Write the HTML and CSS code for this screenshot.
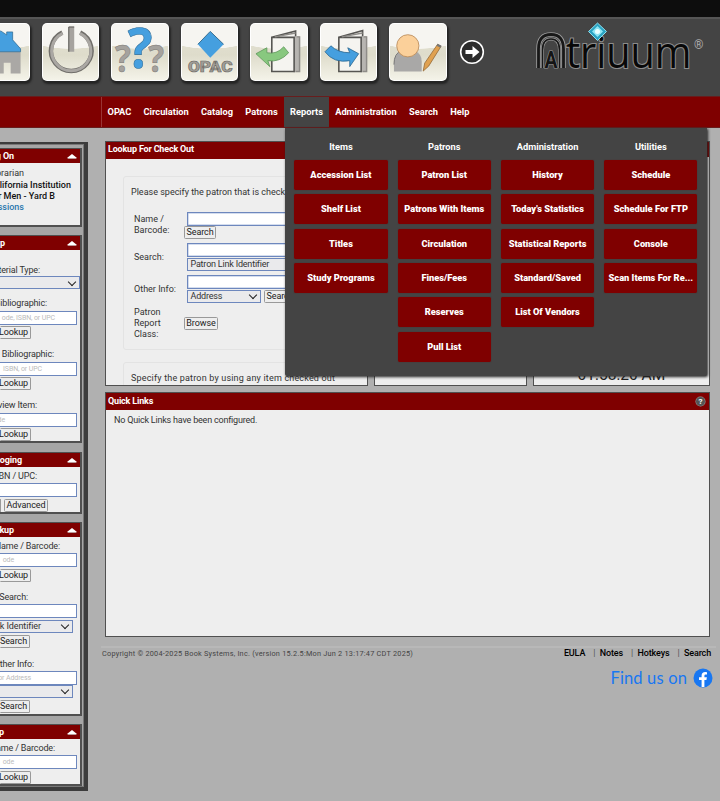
FILE: index.html
```html
<!DOCTYPE html>
<html lang="en">
<head>
<meta charset="utf-8">
<title>Atriuum</title>
<link rel="stylesheet" href="styles.css">
</head>
<body>
<div class="topbar"></div>
<header class="header">
  <div class="tiles">
    <div class="tile"><svg viewBox="0 0 58 58"><path d="M8 29h41v22H39V40h-7v11H8z" fill="#aaa8a5"/><path d="M6 29v-3L29 8l6 4V9h6v8l8 9v3z" fill="#459fdf" stroke="#28648d" stroke-width=".7"/></svg></div>
    <div class="tile"><svg viewBox="0 0 58 58"><path d="M20.500 9.500a20.500 20.500 0 1 0 18 0" fill="none" stroke="#706e6a" stroke-width="4.500"/><path d="M20.800 10.500a19.800 19.800 0 1 0 17.400 0" fill="none" stroke="#aaa7a3" stroke-width="3"/><path d="M27 4h5.500v25H27z" fill="#a6a39f"/><path d="M27 29V4h5.500" fill="none" stroke="#55534f"/></svg></div>
    <div class="tile"><svg viewBox="0 0 58 58"><g class="q"><text class="q-small" x="4" y="49.500" textLength="16" lengthAdjust="spacingAndGlyphs">?</text><text class="q-small" x="37.500" y="49.500" textLength="16" lengthAdjust="spacingAndGlyphs">?</text><text class="q-big" x="17" y="45" textLength="25" lengthAdjust="spacingAndGlyphs">?</text></g></svg></div>
    <div class="tile"><svg viewBox="0 0 58 58"><path d="M29.500 8.500 43 21.500 29.500 35 17 21.500z" fill="#459fdf"/><path d="M17 21.500 29.500 8.500 43 21.500" fill="none" stroke="#376d91" stroke-width="1"/><text class="tile-word" x="7" y="49" textLength="45" lengthAdjust="spacingAndGlyphs">OPAC</text></svg></div>
    <div class="tile"><svg viewBox="0 0 58 58"><path d="M44 14l6-1v36l-6 1z" fill="#b7b5b1"/><path d="M22 14.500 46 8v5.500M22 14.500h22.500V49H22z" fill="#f5f4f0" stroke="#565552" stroke-width="1.600"/><path d="M25 14 46 10M47 14h3v35h-4" fill="none" stroke="#8e8c88" stroke-width="1.500"/><path d="M6 31 17 25v5q10 2 17-6l5 6q-9 10-21 8l2 6z" fill="#88c87f" stroke="#5e9659" stroke-width=".8"/></svg></div>
    <div class="tile"><svg viewBox="0 0 58 58"><path d="M41 14l6-1v36l-6 1z" fill="#b7b5b1"/><path d="M19 14.500 43 7.500v6M19 14.500h22.500V49H19z" fill="#f5f4f0" stroke="#565552" stroke-width="1.600"/><path d="M22 14 43 10M44 14h3v35h-4" fill="none" stroke="#8e8c88" stroke-width="1.500"/><path d="m5 29 6-6q7 7 19 7l-2-5 11 6-9 13v-6q-16 3-25-9z" fill="#459fdf" stroke="#28658f" stroke-width=".8"/></svg></div>
    <div class="tile"><svg viewBox="0 0 58 58"><path d="M5 49V39q1-9 8-11h13q7 3 7 11v10z" fill="#a9a8a7"/><path d="M5 42q0-12 8-14" fill="none" stroke="#777"/><circle cx="19" cy="23" r="11.200" fill="#fbd09a" stroke="#b58656" stroke-width=".8"/><path d="m34.500 48.500 1.500-8 13-19 3.500 2-12.500 20z" fill="#e0a150" stroke="#946a37" stroke-width=".8"/><path d="m49 21 4 2-1 2-4-2z" fill="#777"/></svg></div>
  </div>
  <svg class="next" viewBox="0 0 26 26"><circle cx="13" cy="13" r="11.300" fill="#2c2c2c" stroke="#fff" stroke-width="1.600"/><path d="M6.500 11h7V7l7 6-7 6v-4h-7z" fill="#fff"/></svg>
  <svg class="logo" viewBox="0 0 176 54">
    <g fill="none">
      <path d="M2.500 45V26Q2.500 11.500 15 11.500T27.500 26v19" stroke="#9a9a9a" stroke-width="4.600"/>
      <path d="M2.500 45V26Q2.500 11.500 15 11.500T27.500 26v19" stroke="#181818" stroke-width="2.800"/>
      <path d="M6.500 45V27Q6.500 16 15 16t8.500 11v18" stroke="#9a9a9a" stroke-width="3"/>
      <path d="M6.500 45V27Q6.500 16 15 16t8.500 11v18" stroke="#181818" stroke-width="1.600"/>
    </g>
    <text class="logo-a" x="8.500" y="45" textLength="13" lengthAdjust="spacingAndGlyphs">A</text>
    <text class="logo-text" x="30" y="45" textLength="125.500" lengthAdjust="spacingAndGlyphs">triuum</text>
    <text class="logo-r" x="158" y="25.500">®</text>
    <path d="m61.500 0 9 8.500-9 9-9-9z" fill="#2aa3c2" stroke="#8edcec"/><path d="m61.500 3 5.500 5.500-5.500 5.500L56 8.500z" fill="#8fe6f4"/><circle cx="61.500" cy="8.500" r="2.500" fill="#e8ffff"/>
  </svg>
</header>
<nav class="nav">
  <a>OPAC</a><a>Circulation</a><a>Catalog</a><a>Patrons</a><a class="active">Reports</a><a>Administration</a><a>Search</a><a>Help</a>
  <div class="menu">
    <div class="col"><h3>Items</h3><b>Accession List</b><b>Shelf List</b><b>Titles</b><b>Study Programs</b></div>
    <div class="col"><h3>Patrons</h3><b>Patron List</b><b>Patrons With Items</b><b>Circulation</b><b>Fines/Fees</b><b>Reserves</b><b>Pull List</b></div>
    <div class="col"><h3>Administration</h3><b>History</b><b>Today's Statistics</b><b>Statistical Reports</b><b>Standard/Saved</b><b>List Of Vendors</b></div>
    <div class="col"><h3>Utilities</h3><b>Schedule</b><b>Schedule For FTP</b><b>Console</b><b>Scan Items For Re...</b></div>
  </div>
</nav>
<div class="page">
  <aside class="side">
    <section class="panel p-user"><h2><span class="w14">g On</span><i></i></h2>
      <p class="w24">orarian</p><p class="w71 strong">alifornia Institution</p><p class="w55 strong">r Men - Yard B</p><p class="w24 link">ssions</p></section>
    <section class="panel p-lookup"><h2><span class="w5">p</span><i></i></h2>
      <div class="field first"><label class="w40">terial Type:</label><div class="select wide"></div></div>
      <div class="field"><label class="w47">Bibliographic:</label><div class="input"><span class="w55">ode, ISBN, or UPC</span></div><button>Lookup</button></div>
      <div class="field"><label class="w54">Bibliographic:</label><div class="input"><span class="w42">ISBN, or UPC</span></div><button>Lookup</button></div>
      <div class="field"><label class="w37">view Item:</label><div class="input"><span class="w5">de</span></div><button>Lookup</button></div></section>
    <section class="panel tight p-catalog"><h2><span class="w22">oging</span><i></i></h2>
      <div class="field"><label class="w37">BN / UPC:</label><div class="input"></div><div class="buttons"><button class="stub"></button><button class="adv">Advanced</button></div></div></section>
    <section class="panel tight p-patron"><h2><span class="w14">kup</span><i></i></h2>
      <div class="field"><label class="w60">Name / Barcode:</label><div class="input"><span class="w14">ode</span></div><button>Lookup</button></div>
      <div class="field tall"><label class="w28">Search:</label><div class="input"></div><div class="select gap"><span class="w41">k Identifier</span></div><button class="b-search">Search</button></div>
      <div class="field"><label class="w34">ther Info:</label><div class="input"><span class="w31">or Address</span></div><div class="select"></div><button class="b-search">Search</button></div></section>
    <section class="panel tight p-last"><h2><span class="w4">p</span><i></i></h2>
      <div class="field"><label class="w55">ame / Barcode:</label><div class="input"><span class="w14">ode</span></div><button>Lookup</button></div></section>
  </aside>
  <main class="main">
    <div class="cards">
      <section class="card"><h2>Lookup For Check Out</h2>
        <div class="box lookup">
          <p>Please specify the patron that is checking out</p>
          <div class="row r1"><label>Name /<br>Barcode:</label><div><div class="input"></div><button>Search</button></div></div>
          <div class="row r2"><label>Search:</label><div><div class="input"></div><div class="select long"><span>Patron Link Identifier</span></div></div></div>
          <div class="row r3"><label>Other Info:</label><div><div class="input"></div><div class="pair"><div class="select"><span>Address</span></div><button>Search</button></div></div></div>
          <div class="row r4"><label>Patron<br>Report<br>Class:</label><button>Browse</button></div>
        </div>
        <div class="box item"><p>Specify the patron by using any item checked out</p></div>
      </section>
      <section class="card"><h2></h2></section>
      <section class="card clock"><h2></h2><time>01:58:20 AM</time></section>
    </div>
    <section class="card quick"><h2>Quick Links<em>?</em></h2><p>No Quick Links have been configured.</p></section>
    <footer>
      <div class="foot"><small>Copyright © 2004-2025 Book Systems, Inc. (version 15.2.5:Mon Jun 2 13:17:47 CDT 2025)</small>
        <div class="links"><a>EULA</a><a>Notes</a><a>Hotkeys</a><a>Search</a></div></div>
      <div class="find"><span>Find us on</span><svg viewBox="0 0 20 20"><circle cx="10" cy="10" r="9.500" fill="#1877f2"/><path d="M8.600 19v-7H6V9.300h2.600V7.500q0-3.500 3.700-3.500l1.700.2v2.300h-1.300q-1.300 0-1.300 1.300v1.500h2.500l-.5 2.700h-2V19z" fill="#fff"/></svg></div>
    </footer>
  </main>
</div>
</body>
</html>
```

FILE: styles.css
```css
* { box-sizing: border-box; }
html, body { margin: 0; width: 720px; height: 801px; overflow: hidden; }
body { background: #b0b0b0; font: 9px/12px Roboto, "Liberation Sans", sans-serif; color: #333; }
h2, h3, p { margin: 0; font-size: 9px; }

.topbar { height: 17px; background: #0d0d0d; }
.header { height: 79px; background: #444; border-top: 2px solid #555; display: flex; }
.tiles { display: flex; gap: 12px; margin: 4px 0 0 -28px; flex: none; }
.tile { width: 57.5px; height: 57.5px; border-radius: 5px; background: radial-gradient(ellipse 60px 26px at 50% 0, #f6f5f1 98%, transparent 100%), linear-gradient(#e5e3d5, #dedccb 55%, #f5f4ea); box-shadow: inset 0 0 0 1px #fff, 1px 2px 2px 1px #242424; }
.tile svg { display: block; width: 100%; height: 100%; }
.q text { font-family: "Open Sans", sans-serif; font-weight: 700; }
.q-small { font-size: 37px; fill: #a5a29e; stroke: #7a7773; stroke-width: .5px; }
.q-big { font-size: 56px; fill: #459fdf; stroke: #2e6c98; stroke-width: .6px; }
.tile-word { font: 900 15px Roboto, sans-serif; fill: #a29f99; stroke: #6d6a65; stroke-width: .6px; }
.next { width: 26px; height: 26px; margin: 20px 0 0 12.500px; flex: none; }
.logo { width: 176px; height: 54px; margin: 4px 0 0 50.500px; flex: none; overflow: visible; }
.logo-a { font: 700 23px Roboto, sans-serif; fill: #151515; stroke: #9a9a9a; stroke-width: 1.200px; paint-order: stroke; }
.logo-text { font: 500 43px "Open Sans", sans-serif; fill: #080808; stroke: #8c8c8c; stroke-width: 2.200px; paint-order: stroke; }
.logo-r { font: 400 12px Roboto, sans-serif; fill: #aaa; }

.nav { position: relative; height: 32px; background: #7f0000; border-top: 1px solid #681d1d; border-bottom: 1px solid #681d1d; display: flex; padding-left: 101px; color: #fff; font-weight: 700; line-height: 30px; }
.nav a { padding: 0 6.150px; white-space: nowrap; font-size: 9.250px; }
.nav a:first-child { border-left: 1px solid #9a3434; padding-left: 5.500px; }
.nav .active { background: #444; }
.menu { position: absolute; z-index: 5; left: 285px; top: 31px; width: 422px; height: 247.500px; background: #444; box-shadow: 1px 1px 3px #222; border-radius: 0 0 2px 2px; padding: 9px 9.300px; display: grid; grid-template-columns: repeat(4, 93.300px); column-gap: 10px; font-size: 9.250px; }
.col { display: flex; flex-direction: column; gap: 4.400px; text-align: center; }
.col h3 { height: 18.400px; line-height: 20px; font-size: 9.250px; }
.col b { flex: none; height: 30px; background: #7f0000; border-radius: 2px; white-space: nowrap; box-shadow: 0 0 1px #5d1414; }

.page { display: flex; }
.side { width: 88px; height: 649px; margin-top: 14px; padding: 6px 2px 0 0; display: flex; flex-direction: column; background: #a6a6a6; border: solid #3c3c3c; border-width: 2px 4px 4px 0; box-shadow: inset 0 1px #777, inset -1px -1px #777; letter-spacing: -.1px; }
.panel { flex: none; width: 82px; border: solid #505050; border-width: 1px 2px 2px 0; background: #eee; overflow: hidden; display: flex; flex-direction: column; align-items: flex-start; white-space: nowrap; }
.panel h2 { width: 81px; height: 14px; flex: none; background: #7f0000; color: #fff; display: flex; align-items: center; justify-content: space-between; padding-right: 4px; }
.panel h2 i { border: solid transparent; border-width: 0 5px 4px; border-bottom-color: #fff; border-top: 0; filter: drop-shadow(0 1px #b99); }
.panel span, .panel p, .panel label { display: flex; justify-content: flex-end; flex: none; }
.w4 { width: 4px; } .w5 { width: 5px; } .w14 { width: 14px; } .w22 { width: 22px; } .w24 { width: 24px; } .w28 { width: 28px; } .w31 { width: 31px; } .w34 { width: 34px; } .w37 { width: 37px; } .w40 { width: 40px; } .w41 { width: 41px; } .w42 { width: 42px; } .w47 { width: 47px; } .w54 { width: 54px; } .w55 { width: 55px; } .w60 { width: 60px; } .w71 { width: 71px; }
.p-user { height: 79px; margin-top: -2px; }
.p-user p { height: 11px; line-height: 12px; }
.p-user p:nth-of-type(1) { margin: 4px 0 1px; }
.p-user p.link { color: #2a78ae; }
.p-user p { letter-spacing: 0; }
.strong { color: #111; font-weight: 500; }
.link { font-weight: 500; }
.p-lookup { height: 208px; margin-top: 8px; }
.p-catalog { height: 62px; margin-top: 9px; }
.p-patron { height: 194px; margin-top: 8px; }
.p-last { height: 62px; margin-top: 8px; }
.field { display: flex; flex-direction: column; align-items: flex-start; height: 51px; flex: none; }
.field label { height: 12px; margin-bottom: 2px; letter-spacing: -.15px; }
.field.first { height: 47px; padding-top: 14px; }
.field.first label { margin-bottom: 0; }
.tight .field { margin-top: 3px; height: 48px; }
.tight .field label { margin-bottom: 1px; }
.tight .field.tall { height: 64px; }
.input { width: 78px; height: 13.500px; flex: none; background: #fff; border: 1px solid #6d87bd; display: flex; align-items: center; color: #bbb; box-shadow: inset 0 0 0 .5px #a9bbdd; }
.side .input, .side .select { border-left: 0; box-shadow: none; }
.side .input { font-size: 7px; width: 77.400px; }
.select { width: 73px; height: 13px; flex: none; background: #eaeaec; border: 1px solid #6d87bd; display: flex; align-items: center; justify-content: space-between; padding-right: 4px; line-height: 11px; }
.select::after { content: ""; width: 5px; height: 5px; border: solid #222; border-width: 0 1.300px 1.300px 0; transform: translateY(-1px) rotate(45deg); margin-left: auto; }
.select.wide { width: 80px; }
.select.gap { margin-top: 2px; }
button { font: 9px/11px Roboto, sans-serif; letter-spacing: -.1px; color: #222; background: #eee; border: 1px solid #999; border-radius: 1.500px; height: 13px; padding: 0; flex: none; }
.side button { margin-top: 1.500px; width: 31px; border-left: 0; display: flex; justify-content: flex-end; padding-right: 2px; }
.side .b-search { width: 30px; }
.buttons { display: flex; gap: 3px; }
.side .stub { width: 1px; padding: 0; }
.side .adv { width: 44px; border-left: 1px solid #999; justify-content: center; padding: 0; }
.tight .field button { margin-top: 2px; }

.main { width: 605px; margin: 13px 0 0 17px; flex: none; }
.cards { display: grid; grid-template-columns: 263px 153px 177px; column-gap: 6px; height: 244.500px; }
.card { border: 1.500px solid #505050; background: #eee; overflow: hidden; height: 244.500px; }
.card h2 { height: 17px; line-height: 15px; background: #7f0000; color: #fff; padding-left: 2px; letter-spacing: -.18px; }
.box { margin-left: 17px; width: 260px; border: 1px solid #e3e3e3; border-radius: 3px; padding: 9px 7px; white-space: nowrap; }
.lookup { margin-top: 17px; height: 174px; }
.item { margin-top: 12px; height: 50px; }
.item p { letter-spacing: .18px; }
.row { display: grid; grid-template-columns: 49.500px 1fr; margin-left: 3px; line-height: 11px; align-items: center; }
.r1 { margin-top: 14px; height: 26px; }
.row .input { width: 120px; margin-left: 3px; }
.row > div > button { margin-left: .5px; display: block; }
.row > button { margin-left: .5px; width: 34px; }
.r1 button { width: 32px; }
.row .select { width: 74.500px; margin-left: 3px; margin-top: 1px; padding-left: 3px; letter-spacing: -.2px; }
.row .select.long { width: 120px; }
.r2 { margin-top: 5px; height: 28px; }
.r3 { margin-top: 4px; height: 28px; }
.r4 { margin-top: 3px; height: 34px; }
.pair { display: flex; gap: 3px; }
.pair button { width: 32px; margin-top: 1px; }
.clock { display: flex; flex-direction: column; }
time { font-size: 15.600px; line-height: 20px; color: #222; text-align: center; margin: 208px 0 0; }
.quick { margin-top: 6.500px; }
.quick h2 { display: flex; justify-content: space-between; align-items: center; padding-right: 4px; }
.quick em { font-style: normal; width: 9px; height: 9px; line-height: 9px; font-size: 8px; text-align: center; background: #555; box-shadow: 0 0 0 .5px #999; border-radius: 50%; }
.quick p { padding: 4px 8px; letter-spacing: -.2px; }
footer { margin: 9px 0 0 -4px; width: 615px; border-top: 2px solid #b8b8b8; }
.foot { display: flex; justify-content: space-between; height: 12px; align-items: center; padding-right: 5px; margin-left: 1px; }
small { font-size: 7.300px; letter-spacing: .24px; color: #444; }
.links { display: flex; color: #000; font-weight: 500; line-height: 11px; letter-spacing: -.15px; }
.links a + a { margin-left: 8px; }
.links a + a::before { content: "|"; color: #555; font-weight: 400; margin-right: 4.500px; }
.find { display: flex; justify-content: flex-end; align-items: center; gap: 6px; margin-top: 8px; padding-right: 3px; height: 21px; color: #1877f2; font: 16.500px/20px Lato, sans-serif; letter-spacing: .15px; }
.find svg { width: 20px; height: 20px; }
```
